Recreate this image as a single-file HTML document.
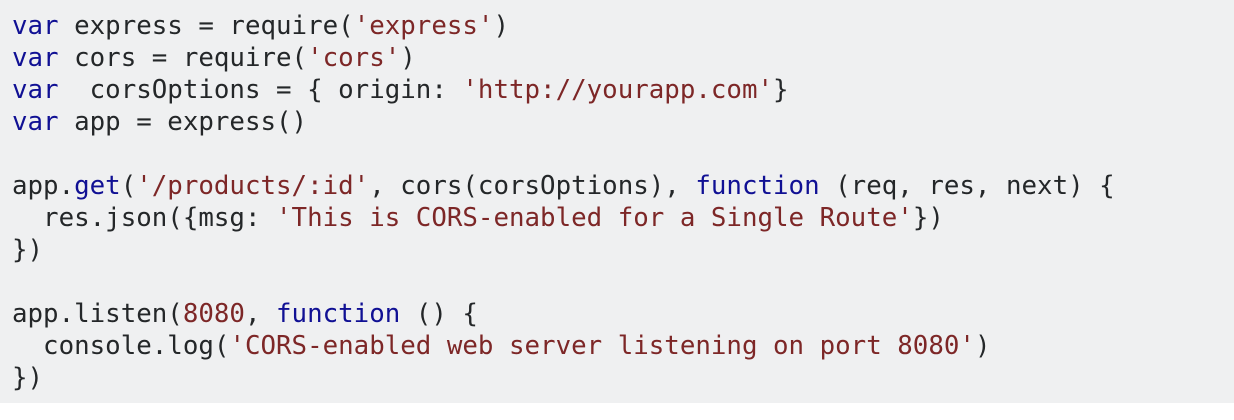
<!DOCTYPE html>
<html><head><meta charset="utf-8"><style>
html,body{margin:0;padding:0;background:#fff;width:1234px;height:420px;overflow:hidden}
pre{margin:0;height:403px;box-sizing:border-box;background:#eff0f1;padding:10px 0 0 12px;font-family:"DejaVu Sans Mono","Liberation Mono",monospace;font-size:25.8px;line-height:32px;color:#242729}
.k{color:#101094}.s{color:#7d2727}.n{color:#7d2727}
</style></head><body><pre><span class="k">var</span> express = require(<span class="s">'express'</span>)
<span class="k">var</span> cors = require(<span class="s">'cors'</span>)
<span class="k">var</span>  corsOptions = { origin: <span class="s">'http://yourapp.com'</span>}
<span class="k">var</span> app = express()

app.<span class="k">get</span>(<span class="s">'/products/:id'</span>, cors(corsOptions), <span class="k">function</span> (req, res, next) {
  res.json({msg: <span class="s">'This is CORS-enabled for a Single Route'</span>})
})

app.listen(<span class="n">8080</span>, <span class="k">function</span> () {
  console.log(<span class="s">'CORS-enabled web server listening on port 8080'</span>)
})</pre></body></html>
